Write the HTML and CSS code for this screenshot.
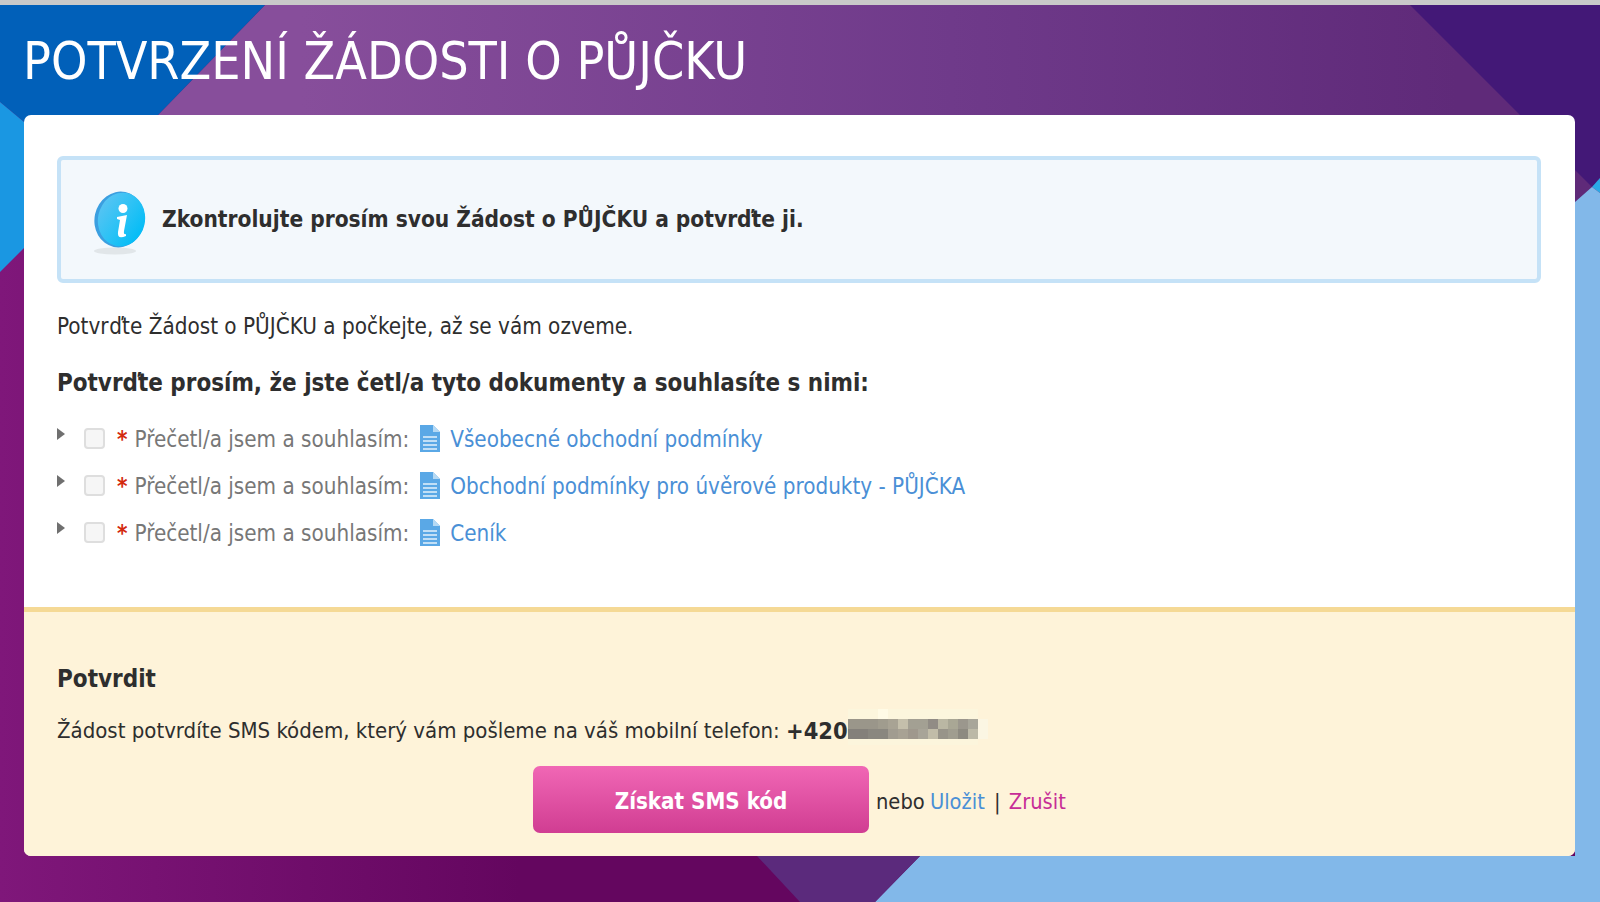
FILE: index.html
```html
<!DOCTYPE html>
<html lang="cs">
<head>
    <meta charset="UTF-8">
    <meta name="viewport" content="width=device-width, initial-scale=1.0">
    <title>Potvrzení žádosti o půjčku</title>
    <link rel="stylesheet" href="styles.css">
</head>
<body>
    <svg class="backdrop" viewBox="0 0 1600 902" preserveAspectRatio="none" aria-hidden="true">
        <defs>
            <linearGradient id="topGrad" x1="0" y1="0" x2="1" y2="0">
                <stop offset="0.1" stop-color="#874e9b"/>
                <stop offset="0.55" stop-color="#6f3a8a"/>
                <stop offset="0.9" stop-color="#5f2a79"/>
            </linearGradient>
            <linearGradient id="lowGrad" gradientUnits="userSpaceOnUse" x1="0" y1="0" x2="520" y2="0">
                <stop offset="0" stop-color="#7f177a"/>
                <stop offset="1" stop-color="#64065f"/>
            </linearGradient>
        </defs>
        <rect width="1600" height="902" fill="url(#lowGrad)"/>
        <polygon points="158,115 265,5 1600,5 1600,210 1575,210 1575,115" fill="url(#topGrad)"/>
        <polygon points="0,5 265,5 158,115 24,122 0,102" fill="#0160b9"/>
        <polygon points="0,102 24,122 24,248 0,272" fill="#1a97e2"/>
        <polygon points="1410,5 1600,5 1600,178 1592,187" fill="#431877"/>
        <polygon points="1592,187 1600,178 1600,193" fill="#2aa9e6"/>
        <polygon points="1592,187 1600,193 1600,902 875,902 920,856 1575,856 1575,202" fill="#82b8e9"/>
        <polygon points="757,856 920,856 875,902 800,902" fill="#5b2a7c"/>
    </svg>

    <h1 class="page-title">POTVRZENÍ ŽÁDOSTI O PŮJČKU</h1>

    <main class="card">
        <div class="card-body">
            <div class="notice">
                <svg class="notice-icon" viewBox="0 0 56 64" aria-hidden="true">
                    <defs>
                        <linearGradient id="infoGrad" x1="0" y1="0" x2="1" y2="0.5">
                            <stop offset="0" stop-color="#62c4f2"/>
                            <stop offset="0.6" stop-color="#2cc2f5"/>
                            <stop offset="1" stop-color="#08bdf6"/>
                        </linearGradient>
                    </defs>
                    <ellipse cx="23" cy="60" rx="21" ry="3.500" fill="#e1e6e9"/>
                    <ellipse cx="27.500" cy="28.500" rx="25" ry="28" transform="rotate(12 27.500 28.500)" fill="#3b9fe0"/>
                    <ellipse cx="29.500" cy="28.500" rx="23.500" ry="27" transform="rotate(12 29.500 28.500)" fill="url(#infoGrad)"/>
                    <circle cx="31" cy="17.500" r="4.500" fill="#fff"/>
                    <path d="M25 26 L35 24 L32 40 Q31.500 44 34 43 L34 45 Q25 49 26 41 L28 29 L25 28 Z" fill="#fff"/>
                </svg>
                <strong class="notice-text">Zkontrolujte prosím svou Žádost o PŮJČKU a potvrďte ji.</strong>
            </div>

            <p class="lead">Potvrďte Žádost o PŮJČKU a počkejte, až se vám ozveme.</p>
            <h2 class="docs-title">Potvrďte prosím, že jste četl/a tyto dokumenty a souhlasíte s nimi:</h2>

            <ul class="docs">
                <li class="doc-row">
                    <span class="arrow"></span>
                    <input type="checkbox" class="doc-check">
                    <span class="req">*</span>
                    <span class="doc-label">Přečetl/a jsem a souhlasím:</span>
                    <svg class="doc-icon" viewBox="0 0 20 27" aria-hidden="true"><path d="M0 0H13L20 7V27H0Z" fill="#5aa8e6"/><path d="M13 0L20 7H13Z" fill="#b5d9f4"/><path d="M3 12H17M3 16H17M3 20H17M3 24H17" stroke="#e3f1fb" stroke-width="1.500"/></svg>
                    <a href="#" class="doc-link">Všeobecné obchodní podmínky</a>
                </li>
                <li class="doc-row">
                    <span class="arrow"></span>
                    <input type="checkbox" class="doc-check">
                    <span class="req">*</span>
                    <span class="doc-label">Přečetl/a jsem a souhlasím:</span>
                    <svg class="doc-icon" viewBox="0 0 20 27" aria-hidden="true"><path d="M0 0H13L20 7V27H0Z" fill="#5aa8e6"/><path d="M13 0L20 7H13Z" fill="#b5d9f4"/><path d="M3 12H17M3 16H17M3 20H17M3 24H17" stroke="#e3f1fb" stroke-width="1.500"/></svg>
                    <a href="#" class="doc-link">Obchodní podmínky pro úvěrové produkty - PŮJČKA</a>
                </li>
                <li class="doc-row">
                    <span class="arrow"></span>
                    <input type="checkbox" class="doc-check">
                    <span class="req">*</span>
                    <span class="doc-label">Přečetl/a jsem a souhlasím:</span>
                    <svg class="doc-icon" viewBox="0 0 20 27" aria-hidden="true"><path d="M0 0H13L20 7V27H0Z" fill="#5aa8e6"/><path d="M13 0L20 7H13Z" fill="#b5d9f4"/><path d="M3 12H17M3 16H17M3 20H17M3 24H17" stroke="#e3f1fb" stroke-width="1.500"/></svg>
                    <a href="#" class="doc-link">Ceník</a>
                </li>
            </ul>
        </div>

        <div class="confirm">
            <h3 class="confirm-title">Potvrdit</h3>
            <p class="confirm-text">Žádost potvrdíte SMS kódem, který vám pošleme na váš mobilní telefon: <strong class="phone">+420</strong><svg class="phone-blur" viewBox="0 0 140 40" shape-rendering="crispEdges" aria-hidden="true">
                <rect x="0" y="0" width="130" height="10" fill="#fcf6dd"/><rect x="30" y="0" width="10" height="10" fill="#fffbe6"/><rect x="130" y="10" width="10" height="20" fill="#fbf6e3"/>
                <rect x="0" y="30" width="130" height="6" fill="#fcf5dc"/>
                <g>
                    <rect x="0" y="10" width="30" height="10" fill="#9a968a"/><rect x="30" y="10" width="10" height="10" fill="#a09c8e"/><rect x="40" y="10" width="10" height="10" fill="#a8a394"/><rect x="50" y="10" width="10" height="10" fill="#c4bfab"/><rect x="60" y="10" width="20" height="10" fill="#a3a093"/><rect x="80" y="10" width="10" height="10" fill="#918c85"/><rect x="90" y="10" width="10" height="10" fill="#bab7a3"/><rect x="100" y="10" width="10" height="10" fill="#a9a795"/><rect x="110" y="10" width="10" height="10" fill="#9b978d"/><rect x="120" y="10" width="10" height="10" fill="#a8a69a"/>
                </g>
                <g>
                    <rect x="0" y="20" width="20" height="10" fill="#84807a"/><rect x="20" y="20" width="20" height="10" fill="#8a877f"/><rect x="40" y="20" width="10" height="10" fill="#a19c90"/><rect x="50" y="20" width="10" height="10" fill="#a8a294"/><rect x="60" y="20" width="10" height="10" fill="#9f988d"/><rect x="70" y="20" width="10" height="10" fill="#a8a498"/><rect x="80" y="20" width="10" height="10" fill="#c1bca8"/><rect x="90" y="20" width="10" height="10" fill="#989489"/><rect x="100" y="20" width="10" height="10" fill="#a09d8f"/><rect x="110" y="20" width="10" height="10" fill="#8d8a80"/><rect x="120" y="20" width="10" height="10" fill="#bcb9a7"/>
                </g>
            </svg></p>
            <div class="actions">
                <button class="sms-button">Získat SMS kód</button>
                <span class="action-links">nebo <a href="#" class="link-save">Uložit</a> | <a href="#" class="link-cancel">Zrušit</a></span>
            </div>
        </div>
    </main>
</body>
</html>
```

FILE: styles.css
```css
* {
    box-sizing: border-box;
}

body {
    margin: 0;
    height: 902px;
    overflow: hidden;
    position: relative;
    border-top: 5px solid #c9c9c9;
    font-family: "DejaVu Sans Condensed", "DejaVu Sans", sans-serif;
    font-stretch: condensed;
    font-size: 22.300px;
    color: #2e2e2e;
}

.backdrop {
    position: absolute;
    top: -5px;
    left: 0;
    width: 1600px;
    height: 902px;
}

.page-title {
    position: relative;
    margin: 0;
    height: 110px;
    padding: 23px 0 0 23px;
    font-size: 51.500px;
    line-height: 66px;
    font-weight: normal;
    color: #fff;
}

.card {
    position: relative;
    width: 1551px;
    margin-left: 24px;
    height: 741px;
    background: #fff;
    border-radius: 7px;
    overflow: hidden;
    display: flex;
    flex-direction: column;
}

.card-body {
    height: 492px;
    padding: 41px 34px 0 33px;
}

.notice {
    height: 127px;
    border: 4px solid #c5e2f7;
    border-radius: 6px;
    background: #f3f8fc;
    display: flex;
    align-items: center;
    padding-left: 31px;
    gap: 14px;
}

.notice-icon {
    width: 56px;
    height: 64px;
    flex: none;
    margin-top: 6px;
}

.notice-text {
    margin-top: -2px;
    font-size: 22.500px;
}

.lead {
    margin: 28px 0 0;
    line-height: 30px;
}

.docs-title {
    margin: 27px 0 0;
    font-size: 23.950px;
    line-height: 30px;
}

.docs {
    list-style: none;
    margin: 17px 0 0;
    padding: 0;
}

.doc-row {
    position: relative;
    height: 47px;
    display: flex;
    align-items: center;
    font-size: 22.250px;
}

.arrow {
    width: 0;
    height: 0;
    margin-top: -10px;
    border-left: 8px solid #6f6f6f;
    border-top: 6px solid transparent;
    border-bottom: 6px solid transparent;
}

.doc-check {
    appearance: none;
    width: 21px;
    height: 21px;
    margin: 0 0 0 19px;
    background: #f6f6f6;
    border: 2px solid #dedede;
    border-radius: 4px;
}

.req {
    margin-left: 12px;
    color: #d32a0e;
    font-weight: bold;
}

.doc-label {
    margin-left: 7px;
    color: #777;
}

.doc-icon {
    width: 20px;
    height: 27px;
    margin-left: 11px;
    flex: none;
}

.doc-link {
    margin-left: 10px;
    color: #4a8fd6;
    text-decoration: none;
}

.confirm {
    flex: 1;
    background: #fef3d9;
    border-top: 5px solid #f5d995;
    padding: 52px 34px 0 33px;
}

.confirm-title {
    margin: 0;
    font-size: 24px;
    line-height: 30px;
}

.confirm-text {
    margin: 22px 0 0;
    font-size: 22px;
    line-height: 30px;
    display: flex;
    align-items: center;
    white-space: pre-wrap;
}

.phone {
    font-size: 23.400px;
}

.phone-blur {
    width: 140px;
    height: 40px;
    margin: -7px 0 -3px;
    filter: blur(0.6px);
}

.actions {
    display: flex;
    align-items: center;
    margin: 20px 0 0 476px;
}

.sms-button {
    width: 336px;
    height: 67px;
    padding-top: 3px;
    border: 0;
    border-radius: 7px;
    background: linear-gradient(#f167b5, #d03d92);
    color: #fff;
    font: inherit;
    font-stretch: condensed;
    font-weight: bold;
    font-size: 22.200px;
}

.action-links {
    margin: 3px 0 0 7px;
    font-size: 21.700px;
}

.link-save {
    margin: 0 3px 0 -1px;
    color: #4a8fd6;
    text-decoration: none;
}

.link-cancel {
    margin-left: 2px;
    color: #c72d97;
    text-decoration: none;
}
```
